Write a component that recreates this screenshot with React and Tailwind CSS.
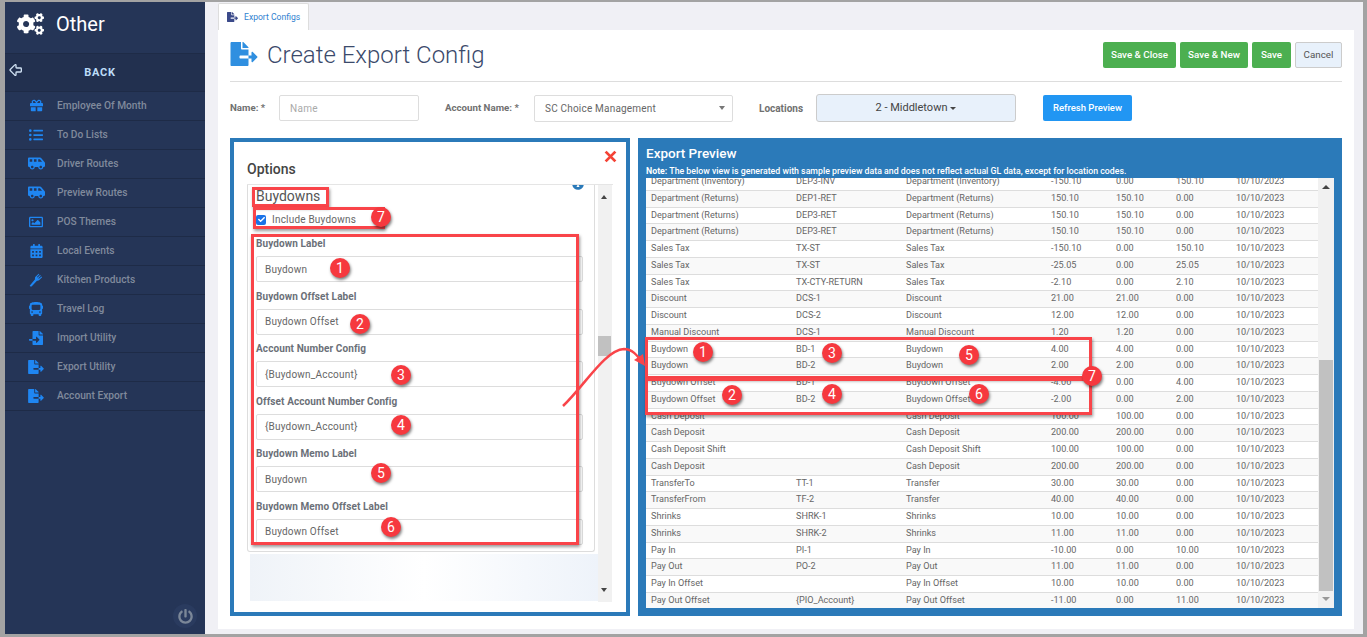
import { ArrowBigLeft } from 'lucide-react';
import {
  FaBus,
  FaCalendarAlt,
  FaCheck,
  FaCogs,
  FaFileExport,
  FaFileImport,
  FaGift,
  FaInfoCircle,
  FaListUl,
  FaPowerOff,
  FaRegImage,
  FaShuttleVan,
} from 'react-icons/fa';

function ForkIcon({ className }) {
  return (
    <svg viewBox="0 0 16 16" className={className} fill="currentColor">
      <path d="M1 14.2 7.4 6.6l2 2-6.2 6.6c-.7.6-2.8-.2-2.2-1z" />
      <path d="M7 7.2c-.5-1.3-.2-2.4.7-3.3L11 .8l.8.7-2.7 3 .7.7 2.9-2.8.8.8-2.9 2.8.7.7 3-2.6.7.8-3.2 3.2c-1 .9-2 1.1-3.2.6z" />
    </svg>
  );
}

const menu = [
  { label: 'Employee Of Month', icon: FaGift, size: 'w-[13px] h-[13px]' },
  { label: 'To Do Lists', icon: FaListUl, size: 'w-[14px] h-[14px]' },
  { label: 'Driver Routes', icon: FaShuttleVan, size: 'w-[17px] h-[15px]' },
  { label: 'Preview Routes', icon: FaShuttleVan, size: 'w-[17px] h-[15px]' },
  { label: 'POS Themes', icon: FaRegImage, size: 'w-[14px] h-[14px]' },
  { label: 'Local Events', icon: FaCalendarAlt, size: 'w-[13px] h-[14px]' },
  { label: 'Kitchen Products', icon: ForkIcon, size: 'w-[14px] h-[14px]' },
  { label: 'Travel Log', icon: FaBus, size: 'w-[14px] h-[14px]' },
  { label: 'Import Utility', icon: FaFileImport, size: 'w-[14px] h-[14px]' },
  { label: 'Export Utility', icon: FaFileExport, size: 'w-[16px] h-[14px]' },
  { label: 'Account Export', icon: FaFileExport, size: 'w-[16px] h-[14px]' },
];

const fields = [
  { label: 'Buydown Label', value: 'Buydown' },
  { label: 'Buydown Offset Label', value: 'Buydown Offset' },
  { label: 'Account Number Config', value: '{Buydown_Account}' },
  { label: 'Offset Account Number Config', value: '{Buydown_Account}' },
  { label: 'Buydown Memo Label', value: 'Buydown' },
  { label: 'Buydown Memo Offset Label', value: 'Buydown Offset' },
];

const dep = 'Department (Returns)';
const rows = [
  ['Department (Inventory)', 'DEP3-INV', 'Department (Inventory)', '-150.10', '0.00', '150.10'],
  [dep, 'DEP1-RET', dep, '150.10', '150.10', '0.00'],
  [dep, 'DEP3-RET', dep, '150.10', '150.10', '0.00'],
  [dep, 'DEP3-RET', dep, '150.10', '150.10', '0.00'],
  ['Sales Tax', 'TX-ST', 'Sales Tax', '-150.10', '0.00', '150.10'],
  ['Sales Tax', 'TX-ST', 'Sales Tax', '-25.05', '0.00', '25.05'],
  ['Sales Tax', 'TX-CTY-RETURN', 'Sales Tax', '-2.10', '0.00', '2.10'],
  ['Discount', 'DCS-1', 'Discount', '21.00', '21.00', '0.00'],
  ['Discount', 'DCS-2', 'Discount', '12.00', '12.00', '0.00'],
  ['Manual Discount', 'DCS-1', 'Manual Discount', '1.20', '1.20', '0.00'],
  ['Buydown', 'BD-1', 'Buydown', '4.00', '4.00', '0.00'],
  ['Buydown', 'BD-2', 'Buydown', '2.00', '2.00', '0.00'],
  ['Buydown Offset', 'BD-1', 'Buydown Offset', '-4.00', '0.00', '4.00'],
  ['Buydown Offset', 'BD-2', 'Buydown Offset', '-2.00', '0.00', '2.00'],
  ['Cash Deposit', '', 'Cash Deposit', '100.00', '100.00', '0.00'],
  ['Cash Deposit', '', 'Cash Deposit', '200.00', '200.00', '0.00'],
  ['Cash Deposit Shift', '', 'Cash Deposit Shift', '100.00', '100.00', '0.00'],
  ['Cash Deposit', '', 'Cash Deposit', '200.00', '200.00', '0.00'],
  ['TransferTo', 'TT-1', 'Transfer', '30.00', '30.00', '0.00'],
  ['TransferFrom', 'TF-2', 'Transfer', '40.00', '40.00', '0.00'],
  ['Shrinks', 'SHRK-1', 'Shrinks', '10.00', '10.00', '0.00'],
  ['Shrinks', 'SHRK-2', 'Shrinks', '11.00', '11.00', '0.00'],
  ['Pay In', 'PI-1', 'Pay In', '-10.00', '0.00', '10.00'],
  ['Pay Out', 'PO-2', 'Pay Out', '11.00', '11.00', '0.00'],
  ['Pay In Offset', '', 'Pay In Offset', '10.00', '10.00', '0.00'],
  ['Pay Out Offset', '{PIO_Account}', 'Pay Out Offset', '-11.00', '0.00', '11.00'],
];

// callouts drawn over the screenshot
const boxes = [
  'left-[252px] top-[187px] w-[77px] h-[20px]',
  'left-[253px] top-[207px] w-[132px] h-[22px]',
  'left-[251px] top-[234px] w-[328px] h-[311px]',
  'left-[645px] top-[337px] w-[447px] h-[42px]',
  'left-[645px] top-[378px] w-[447px] h-[37px]',
];

const badges = [
  ['7', 'left-[371px] top-[207px]'],
  ['1', 'left-[330px] top-[258px]'],
  ['2', 'left-[350px] top-[314px]'],
  ['3', 'left-[391px] top-[365px]'],
  ['4', 'left-[391px] top-[415px]'],
  ['5', 'left-[371px] top-[463px]'],
  ['6', 'left-[381px] top-[517px]'],
  ['1', 'left-[693px] top-[342px]'],
  ['3', 'left-[822px] top-[343px]'],
  ['5', 'left-[959px] top-[345px]'],
  ['7', 'left-[1082px] top-[366px]'],
  ['2', 'left-[722px] top-[385px]'],
  ['4', 'left-[822px] top-[384px]'],
  ['6', 'left-[969px] top-[384px]'],
];

function Sidebar() {
  return (
    <aside className="w-[200px] shrink-0 bg-[#253557] flex flex-col relative">
      <div className="h-[51px] pb-[8px] flex items-center pl-[12px] gap-[12px] text-white">
        <FaCogs className="w-[27px] h-[22px]" />
        <span className="text-[20px] leading-none font-normal">Other</span>
      </div>
      <div className="h-[38.5px] bg-[#22304f] border-y border-[#1e2b47] flex items-center pr-[10px] pt-[1px] relative">
        <ArrowBigLeft className="absolute left-[3px] top-[8px] w-[16px] h-[16px] text-[#cfe0f2]" strokeWidth={2} />
        <span className="w-full text-center text-[11px] font-bold tracking-[0.8px] text-[#bcdcf8]">BACK</span>
      </div>
      {menu.map((m) => {
        const Icon = m.icon;
        return (
          <div key={m.label} className="h-[29px] border-b border-[#1e2b47] flex items-center">
            <div className="w-[52px] pl-[23px] pr-[13px] flex justify-center shrink-0">
              <Icon className={`${m.size} shrink-0 text-[#1f86f2]`} />
            </div>
            <span className="text-[10.2px] font-medium text-[#808a9c]">{m.label}</span>
          </div>
        );
      })}
      <div className="mt-auto mb-[6px] mr-[8px] self-end w-[24px] h-[24px] rounded-full flex items-center justify-center bg-[#2a3b5f]">
        <FaPowerOff className="w-[15px] h-[15px] text-[#7b8798]" />
      </div>
    </aside>
  );
}

function Header() {
  return (
    <div className="h-[52px] border-b border-[#ddd] flex items-start pt-[12px]">
      <FaFileExport className="w-[28px] h-[24px] text-[#2f8fe0]" />
      <h1 className="ml-[9px] text-[24px] leading-[26px] font-light text-[#3b4a6b]">Create Export Config</h1>
      <div className="ml-auto flex gap-[4px] text-[9.8px] font-medium text-white">
        <button className="w-[73px] h-[26px] rounded-[2px] bg-[#4caf50]">Save &amp; Close</button>
        <button className="w-[68px] h-[26px] rounded-[2px] bg-[#4caf50]">Save &amp; New</button>
        <button className="w-[39px] h-[26px] rounded-[2px] bg-[#4caf50]">Save</button>
        <button className="w-[47px] h-[26px] rounded-[2px] bg-[#e8f1fb] border border-[#ccc] text-[#555] font-normal">Cancel</button>
      </div>
    </div>
  );
}

function FormRow() {
  return (
    <div className="h-[52px] flex items-center text-[10px]">
      <label className="w-[49px] text-[9.7px] font-bold text-[#707070]">Name: *</label>
      <div className="w-[140px] h-[26px] border border-[#ddd] rounded-[2px] flex items-center pl-[10px] text-[#aaa] tracking-[0.3px]">Name</div>
      <label className="ml-[26px] w-[89px] text-[9.7px] font-bold text-[#707070]">Account Name: *</label>
      <div className="w-[199px] h-[27px] border border-[#ddd] rounded-[2px] flex items-center justify-between pl-[10px] pr-[7px] text-[#666] tracking-[0.2px]">
        SC Choice Management
        <span className="w-0 h-0 border-x-[3px] border-t-[4px] border-x-transparent border-t-[#777]" />
      </div>
      <label className="ml-[26px] w-[57px] font-bold text-[#707070]">Locations</label>
      <div className="w-[200px] h-[28px] bg-[#e8f1fb] border border-[#ccc] rounded-[3px] flex items-center justify-center text-[11px] text-[#444]">
        2 - Middletown
        <span className="ml-[3px] w-0 h-0 border-x-[3px] border-t-[3px] border-x-transparent border-t-[#444]" />
      </div>
      <button className="ml-[27px] w-[89px] h-[26px] rounded-[2px] bg-[#2196f3] text-white text-[9.5px] font-medium">Refresh Preview</button>
    </div>
  );
}

function OptionsPanel() {
  return (
    <section className="w-[400px] h-[478px] border-[4px] border-[#2b7ab9] bg-white px-[13px] relative flex flex-col shrink-0">
      <span className="absolute right-[9px] top-[8px] text-[#f44336]">
        <svg viewBox="0 0 12 12" className="w-[13px] h-[13px]" fill="none" stroke="currentColor" strokeWidth="2.6">
          <path d="M1.5 1.5 10.5 10.5M10.5 1.5 1.5 10.5" />
        </svg>
      </span>
      <h2 className="h-[43px] pt-[18px] leading-[18px] text-[14px] font-medium text-[#444] border-b border-[#e5e5e5] shrink-0">Options</h2>
      <div className="flex h-[417px] overflow-hidden">
        <div className="w-[351px] shrink-0 relative">
          <div className="w-[348px] h-[367px] border border-t-0 border-[#ddd] rounded-b-[3px] px-[8px] relative overflow-hidden">
            <FaInfoCircle className="absolute right-[10px] -top-[7px] w-[12px] h-[12px] text-[#2b7ab9]" />
            <h3 className="pt-[2px] h-[21px] text-[14px] leading-[18px] text-[#555]">Buydowns</h3>
            <div className="h-[27px] flex items-center">
              <span className="w-[10px] h-[10px] rounded-[2px] bg-[#1a73e8] flex items-center justify-center">
                <FaCheck className="w-[7px] h-[7px] text-white" />
              </span>
              <span className="ml-[6px] text-[10px] tracking-[0.2px] text-[#666]">Include Buydowns</span>
            </div>
            {fields.map((f) => (
              <div key={f.label} className="mb-[3.5px]">
                <div className="h-[23px] pb-[2px] flex items-center text-[10px] font-bold text-[#6b7078] tracking-[0.1px]">{f.label}</div>
                <div className="w-[327px] h-[26px] border border-[#ddd] rounded-[2px] flex items-center pl-[8px] text-[10px] text-[#666] tracking-[0.2px] bg-white">{f.value}</div>
              </div>
            ))}
          </div>
          <div className="mt-[2px] ml-[3px] h-[47px] bg-gradient-to-r from-[#eff3f8] via-white to-[#eef3fa]" />
        </div>
        <div className="w-[14px] bg-[#f1f1f1] relative shrink-0">
          <span className="absolute left-[3px] top-[10px] w-0 h-0 border-x-[3.5px] border-b-[4px] border-x-transparent border-b-[#444]" />
          <span className="absolute left-0 top-[151px] w-[13px] h-[20px] bg-[#c1c1c1]" />
          <span className="absolute left-[3px] top-[403px] w-0 h-0 border-x-[3.5px] border-t-[4px] border-x-transparent border-t-[#444]" />
        </div>
      </div>
    </section>
  );
}

function PreviewPanel() {
  return (
    <section className="w-[704px] h-[478px] bg-[#2b7ab9] px-[8px] flex flex-col shrink-0">
      <h2 className="pt-[7px] h-[26px] text-[13.5px] leading-[17px] font-medium text-white">Export Preview</h2>
      <p className="h-[14px] pt-[2px] text-[8.77px] leading-[11px] font-medium text-white">
        <b>Note:</b> The below view is generated with sample preview data and does not reflect actual GL data, except for location codes.
      </p>
      <div className="flex h-[430px] bg-white overflow-hidden">
        <div className="flex-1 overflow-hidden">
          <div className="-mt-[4px]">
            {rows.map((r, i) => (
              <div
                key={i}
                className={`h-[16.76px] border-b border-[#ddd] flex items-center text-[9.1px] text-[#666] ${i % 2 ? 'bg-[#f9f9f9]' : 'bg-white'}`}
              >
                <span className="w-[150px] pl-[5px] shrink-0">{r[0]}</span>
                <span className="w-[110px] shrink-0">{r[1]}</span>
                <span className="w-[145px] shrink-0">{r[2]}</span>
                <span className="w-[65px] shrink-0">{r[3]}</span>
                <span className="w-[60px] shrink-0">{r[4]}</span>
                <span className="w-[60px] shrink-0">{r[5]}</span>
                <span>10/10/2023</span>
              </div>
            ))}
          </div>
        </div>
        <div className="w-[16px] bg-[#f1f1f1] relative shrink-0">
          <span className="absolute left-[4px] top-[7px] w-0 h-0 border-x-[4px] border-b-[4px] border-x-transparent border-b-[#444]" />
          <span className="absolute left-[1px] top-[182px] w-[14px] h-[231px] bg-[#c1c1c1]" />
          <span className="absolute left-[4px] top-[419px] w-0 h-0 border-x-[4px] border-t-[4px] border-x-transparent border-t-[#999]" />
        </div>
      </div>
    </section>
  );
}

function Callouts() {
  return (
    <>
      {boxes.map((b) => (
        <div key={b} className={`absolute ${b} border-[3px] border-[#f94449] shadow-[1px_2px_3px_rgba(0,0,0,0.4)]`} />
      ))}
      <svg className="absolute left-0 top-0 w-[1367px] h-[637px] pointer-events-none" viewBox="0 0 1367 637" fill="none">
        <path d="M563 406C585 385 605 350 624 349C632 349 637 355 642 362" stroke="#f94449" strokeWidth="2.5" />
        <path d="M645 366 634 360 643 354Z" fill="#f94449" />
      </svg>
      {badges.map(([n, pos]) => (
        <div
          key={pos}
          className={`absolute ${pos} w-[20px] h-[20px] rounded-full bg-[#f6383e] text-white text-[14px] leading-[20px] text-center shadow-[1px_2px_3px_rgba(0,0,0,0.5)]`}
        >
          {n}
        </div>
      ))}
    </>
  );
}

export default function App() {
  return (
    <div className="relative w-[1367px] h-[637px] overflow-hidden bg-[#a3a3a3] pt-[2px] pl-[5px] pr-[4px] pb-[3px] font-['Roboto',sans-serif]">
      <div className="flex h-full">
        <Sidebar />
        <main className="flex-1 bg-[#f0f0f5] flex flex-col pl-[13px] pr-[9px]">
          <div className="h-[28px] flex items-end shrink-0">
            <div className="w-[91px] h-[27px] bg-white border border-b-0 border-[#ddd] rounded-t-[2px] flex items-center pl-[8px] gap-[6px] text-[8.6px] text-[#2f7fd0]">
              <FaFileExport className="w-[11px] h-[10px] text-[#3b4a8a]" />
              Export Configs
            </div>
          </div>
          <div className="h-[599px] bg-white px-[12px] shrink-0">
            <Header />
            <FormRow />
            <div className="flex gap-[8px] mt-[4px]">
              <OptionsPanel />
              <PreviewPanel />
            </div>
          </div>
        </main>
      </div>
      <Callouts />
    </div>
  );
}
